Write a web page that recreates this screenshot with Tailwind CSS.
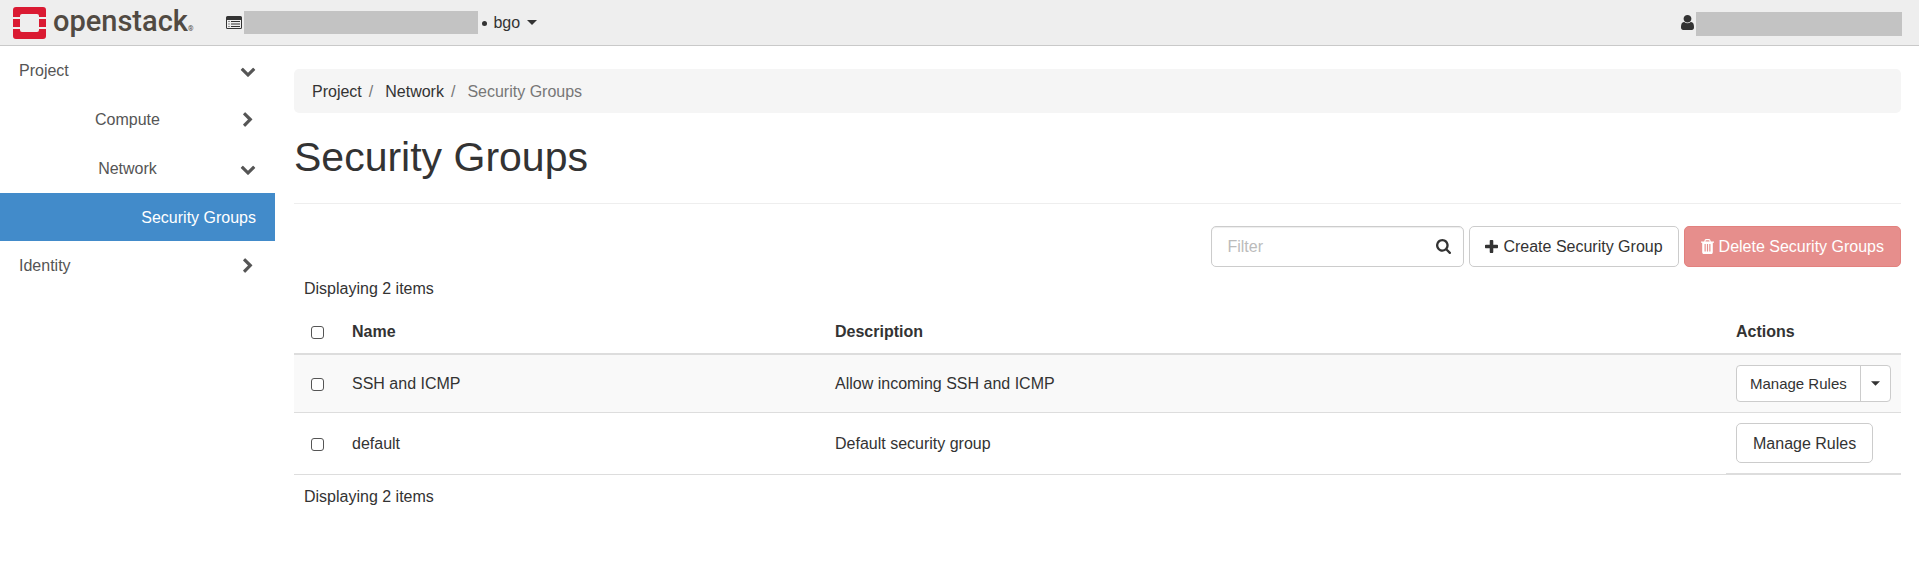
<!DOCTYPE html>
<html lang="en">
<head>
<meta charset="utf-8">
<title>Security Groups - OpenStack Dashboard</title>
<script src="https://cdn.jsdelivr.net/npm/@tailwindcss/browser@4"></script>
</head>
<body class="min-h-screen bg-white font-['Liberation_Sans',Arial,sans-serif] text-base leading-[23px] text-[#333]">
<svg class="hidden" aria-hidden="true">
  <symbol id="down" viewBox="0 0 1792 1792"><path d="M1683 808l-742 741q-19 19-45 19t-45-19l-742-741q-19-19-19-45.500t19-45.500l166-165q19-19 45-19t45 19l531 531 531-531q19-19 45-19t45 19l166 165q19 19 19 45.500t-19 45.500z"/></symbol>
  <symbol id="right" viewBox="0 0 1792 1792"><path d="M1363 877l-742 742q-19 19-45 19t-45-19l-166-166q-19-19-19-45t19-45l531-531-531-531q-19-19-19-45t19-45l166-166q19-19 45-19t45 19l742 742q19 19 19 45t-19 45z"/></symbol>
  <symbol id="caret" viewBox="0 0 10 5"><path d="M0 0h10L5 5z"/></symbol>
</svg>

<header class="flex h-[46px] items-center border-b border-[#c9c9c9] bg-[#eee] pr-[17px]">
  <a href="#" class="flex h-full items-center pl-[13px]" aria-label="openstack">
    <svg class="h-8 w-[33px]" viewBox="0 0 33 32">
      <g fill="#da1a32">
        <path d="M3 0h27a3 3 0 0 1 3 3v7h-7V9a2 2 0 0 0-2-2H9a2 2 0 0 0-2 2v1H0V3a3 3 0 0 1 3-3z"/>
        <path d="M0 12h7v8H0zM26 12h7v8h-7z"/>
        <path d="M0 22h7v1a2 2 0 0 0 2 2h15a2 2 0 0 0 2-2v-1h7v7a3 3 0 0 1-3 3H3a3 3 0 0 1-3-3z"/>
      </g>
    </svg>
    <span class="flex items-baseline pb-1 pl-[7px] font-[Roboto,sans-serif] text-[29px] leading-[36px] font-medium text-[#514a42]">openstack<span class="text-[7px] leading-none">®</span></span>
  </a>
  <button type="button" class="ml-[33px] flex items-center">
    <svg class="h-[13px] w-4" viewBox="0 0 16 13" fill="#333"><path fill-rule="evenodd" d="M1.500 0h13A1.500 1.500 0 0 1 16 1.500v10a1.500 1.500 0 0 1-1.500 1.500h-13A1.500 1.500 0 0 1 0 11.500v-10A1.500 1.500 0 0 1 1.500 0zM1 4v7.500a.5.5 0 0 0 .5.5h13a.5.5 0 0 0 .5-.5V4z"/><path d="M2.500 5h1v1h-1zM2.500 7.500h1v1h-1zM2.500 10h1v1h-1zM5 5h9v1H5zM5 7.500h9v1H5zM5 10h9v1H5z"/></svg>
    <span class="ml-[2px] h-[23px] w-[234px] bg-[#c3c3c3]"></span>
    <span class="ml-1 mt-[2px] size-[5px] rounded-full bg-[#333]"></span>
    <span class="ml-[6px]">bgo</span>
    <svg class="ml-[7px] h-[5px] w-[10px]" fill="#333"><use href="#caret"/></svg>
  </button>
  <button type="button" class="ml-auto flex items-center" aria-label="User menu">
    <svg class="h-[15px] w-[13px]" viewBox="256 128 1280 1536" fill="#333" preserveAspectRatio="none"><path d="M1536 1399q0 109-62.500 187t-150.500 78h-854q-88 0-150.500-78t-62.500-187q0-85 8.500-160.500t31.500-152 58.500-131 94-89 134.500-34.500q131 128 313 128t313-128q76 0 134.500 34.500t94 89 58.500 131 31.500 152 8.500 160.500zm-256-887q0 159-112.500 271.500t-271.500 112.500-271.500-112.500-112.500-271.500 112.500-271.500 271.500-112.500 271.500 112.500 112.500 271.500z"/></svg>
    <span class="ml-[2px] mt-[2px] h-6 w-[206px] bg-[#c3c3c3]"></span>
  </button>
</header>

<div class="flex">
  <nav class="w-[275px] shrink-0 text-[#555]">
    <button type="button" class="flex h-[49px] w-full items-center gap-1 px-[19px]"><span class="flex-1 text-left">Project</span><svg class="size-4" fill="#555"><use href="#down"/></svg></button>
    <button type="button" class="flex h-[49px] w-full items-center gap-1 px-[19px]"><span class="flex-1 text-center">Compute</span><svg class="size-4" fill="#555"><use href="#right"/></svg></button>
    <button type="button" class="flex h-[49px] w-full items-center gap-1 px-[19px]"><span class="flex-1 text-center">Network</span><svg class="size-4" fill="#555"><use href="#down"/></svg></button>
    <a href="#" class="flex h-12 items-center justify-end bg-[#428bca] px-[19px] text-white">Security Groups</a>
    <button type="button" class="flex h-[49px] w-full items-center gap-1 px-[19px]"><span class="flex-1 text-left">Identity</span><svg class="size-4" fill="#555"><use href="#right"/></svg></button>
  </nav>

  <main class="min-w-0 flex-1 pt-[23px] pr-[18px] pl-[19px]">
    <ol class="flex h-11 items-center rounded-[5px] bg-[#f5f5f5] px-[18px] text-[#777]">
      <li><a href="#" class="text-[#333]">Project</a><span class="pr-3 pl-[7px]">/</span></li>
      <li><a href="#" class="text-[#333]">Network</a><span class="pr-3 pl-[7px]">/</span></li>
      <li>Security Groups</li>
    </ol>
    <h1 class="mt-[22px] border-b border-[#eee] pb-[23px] text-[41px] leading-[45px]">Security Groups</h1>

    <div class="mt-[22px] flex justify-end gap-[5px]">
      <form class="flex h-[41px] w-[253px] items-center rounded-[5px] border border-[#ccc] pr-3 pl-[15px] shadow-[inset_0_1px_1px_rgba(0,0,0,0.075)]">
        <input type="text" aria-label="Filter" placeholder="Filter" class="min-w-0 flex-1 bg-transparent outline-none placeholder:text-[#bbb]">
        <button type="submit" aria-label="Search"><svg class="size-[15px]" viewBox="64 128 1664 1664" fill="#333"><path d="M1216 832q0-185-131.500-316.500t-316.500-131.500-316.500 131.500-131.500 316.500 131.500 316.500 316.500 131.500 316.500-131.500 131.500-316.500zm512 832q0 52-38 90t-90 38q-54 0-90-38l-343-342q-179 124-399 124-143 0-273.500-55.500t-225-150-150-225-55.500-273.500 55.500-273.500 150-225 225-150 273.500-55.500 273.500 55.500 225 150 150 225 55.500 273.500q0 220-124 399l343 343q37 37 37 90z"/></svg></button>
      </form>
      <button type="button" class="flex h-[41px] items-center gap-[5px] rounded-[5px] border border-[#ccc] px-[15px]"><svg class="size-[13px]" viewBox="192 128 1408 1408" fill="#333"><path d="M1600 736v192q0 40-28 68t-68 28h-416v416q0 40-28 68t-68 28h-192q-40 0-68-28t-28-68v-416h-416q-40 0-68-28t-28-68v-192q0-40 28-68t68-28h416v-416q0-40 28-68t68-28h192q40 0 68 28t28 68v416h416q40 0 68 28t28 68z"/></svg>Create Security Group</button>
      <button type="button" disabled class="flex h-[41px] items-center gap-[5px] rounded-[5px] border border-[#d43f3a] bg-[#d9534f] px-4 text-white opacity-65"><svg class="h-[15px] w-[13px]" viewBox="192 128 1408 1536" fill="#fff" preserveAspectRatio="none"><path d="M704 1376v-704q0-14-9-23t-23-9h-64q-14 0-23 9t-9 23v704q0 14 9 23t23 9h64q14 0 23-9t9-23zm256 0v-704q0-14-9-23t-23-9h-64q-14 0-23 9t-9 23v704q0 14 9 23t23 9h64q14 0 23-9t9-23zm256 0v-704q0-14-9-23t-23-9h-64q-14 0-23 9t-9 23v704q0 14 9 23t23 9h64q14 0 23-9t9-23zm-544-992h448l-48-117q-7-9-17-11h-317q-10 2-17 11zm928 32v64q0 14-9 23t-23 9h-96v948q0 83-47 143.500t-113 60.500h-832q-66 0-113-58.500t-47-141.500v-952h-96q-14 0-23-9t-9-23v-64q0-14 9-23t23-9h309l70-167q15-37 54-63t79-26h320q40 0 79 26t54 63l70 167h309q14 0 23 9t9 23z"/></svg>Delete Security Groups</button>
    </div>

    <p class="p-[10px]">Displaying 2 items</p>
    <table class="w-full table-fixed border-separate border-spacing-0 text-left">
      <thead>
        <tr class="*:h-[45px] *:border-b-2 *:border-[#ddd] *:px-[10px]">
          <th class="w-12"><input type="checkbox" aria-label="Select all" class="ml-[7px] block size-[13px] translate-y-px appearance-none rounded-[3px] border border-[#555] bg-white"></th>
          <th class="w-[483px]">Name</th>
          <th>Description</th>
          <th class="w-[175px]">Actions</th>
        </tr>
      </thead>
      <tbody>
        <tr class="bg-[#f9f9f9] *:h-[58px] *:border-b *:border-[#ddd] *:px-[10px]">
          <td><input type="checkbox" aria-label="Select SSH and ICMP" class="ml-[7px] block size-[13px] translate-y-px appearance-none rounded-[3px] border border-[#555] bg-white"></td>
          <td>SSH and ICMP</td>
          <td>Allow incoming SSH and ICMP</td>
          <td>
            <div class="flex h-[37px] w-max rounded-[4px] border border-[#ccc] bg-white text-[15px]">
              <button type="button" class="px-[13px]">Manage Rules</button>
              <button type="button" aria-label="More actions" class="flex w-[30px] items-center justify-center border-l border-[#ccc]"><svg class="h-[5px] w-[9px]" fill="#333"><use href="#caret"/></svg></button>
            </div>
          </td>
        </tr>
        <tr class="*:h-[62px] *:border-b *:border-[#ddd] *:px-[10px]">
          <td><input type="checkbox" aria-label="Select default" class="ml-[7px] block size-[13px] translate-y-px appearance-none rounded-[3px] border border-[#555] bg-white"></td>
          <td>default</td>
          <td>Default security group</td>
          <td class="border-b-2!"><button type="button" class="h-10 rounded-[5px] border border-[#ccc] bg-white px-4">Manage Rules</button></td>
        </tr>
      </tbody>
    </table>
    <p class="p-[10px]">Displaying 2 items</p>
  </main>
</div>
</body>
</html>
